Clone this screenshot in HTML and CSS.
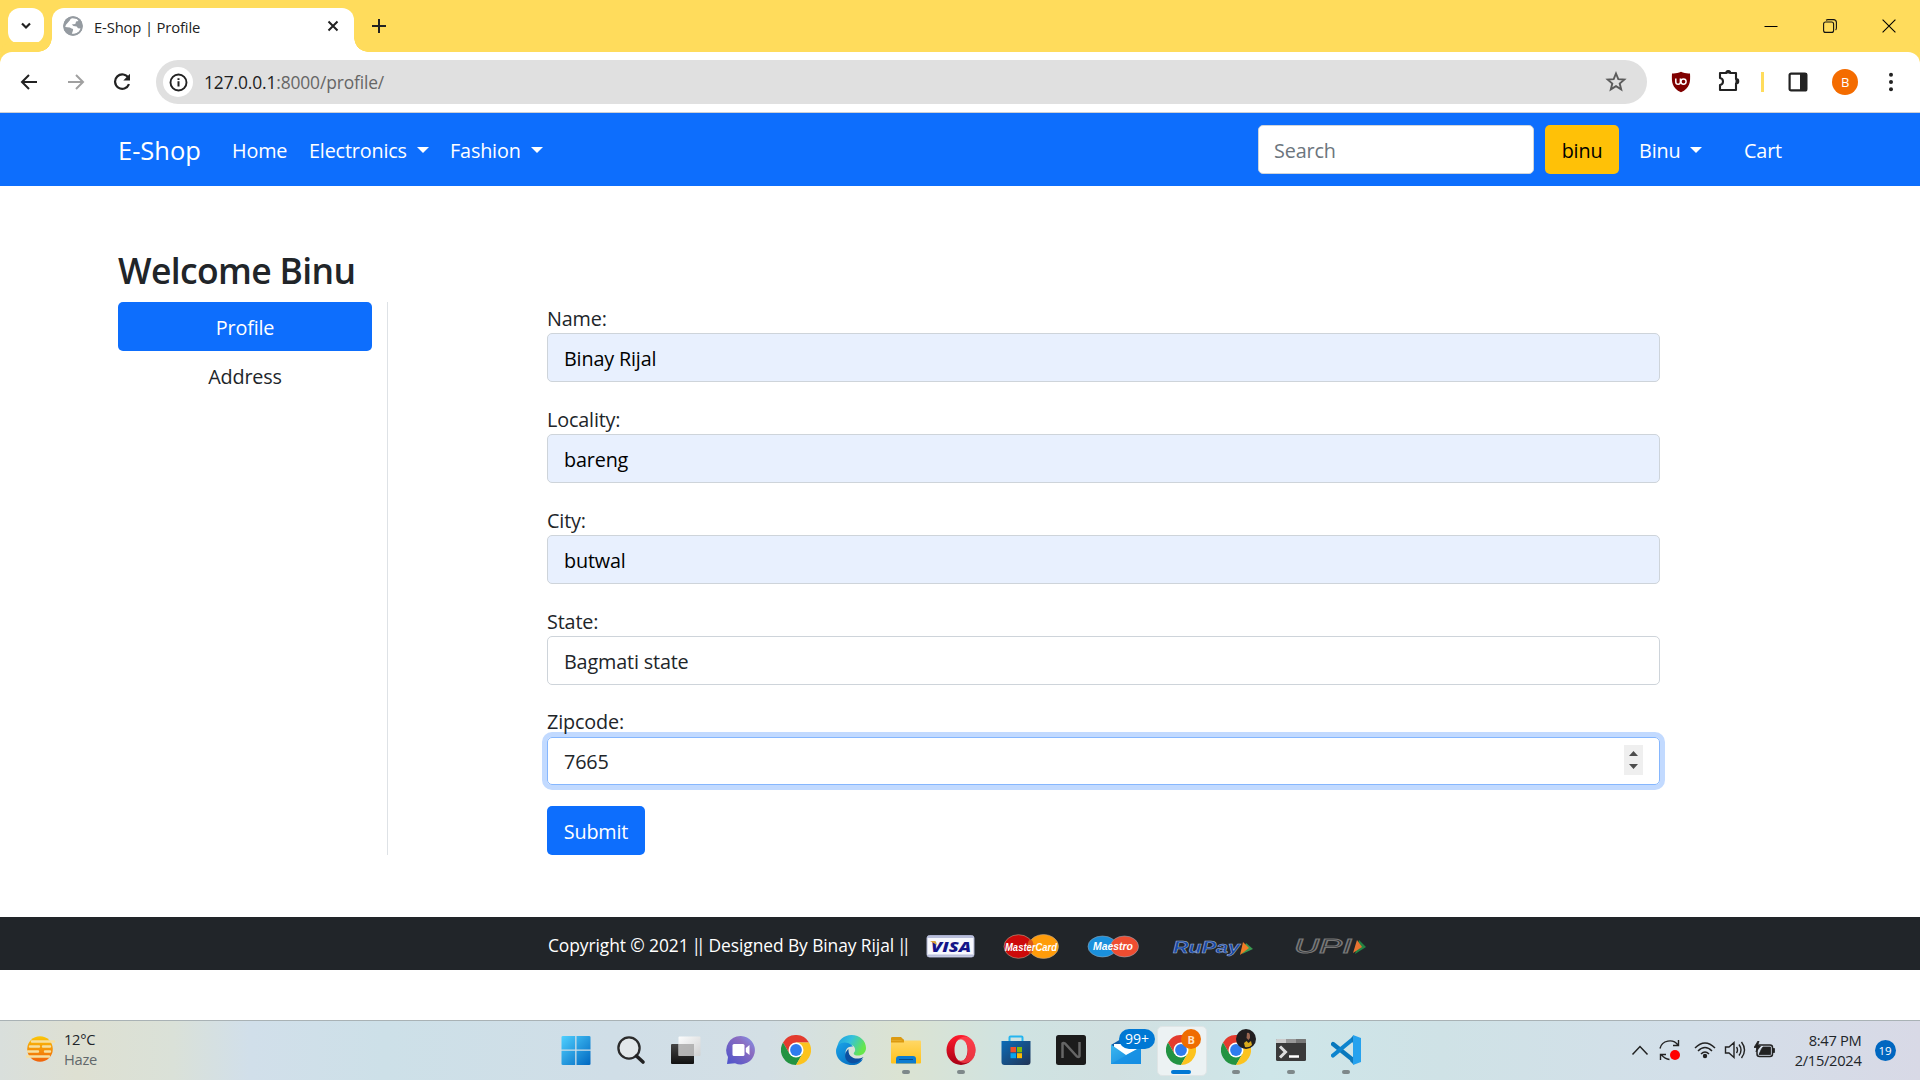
FILE: index.html
```html
<!DOCTYPE html>
<html lang="en">
<head>
<meta charset="utf-8">
<title>E-Shop | Profile</title>
<link rel="stylesheet" href="styles.css">
</head>
<body>
<svg class="defs" width="0" height="0">
  <defs>
    <linearGradient id="win" x1="0" y1="0" x2="1" y2="1"><stop offset="0" stop-color="#4fd0ff"/><stop offset="1" stop-color="#0067c0"/></linearGradient>
    <linearGradient id="dark" x1="0" y1="0" x2="0" y2="1"><stop offset="0" stop-color="#454545"/><stop offset="1" stop-color="#111"/></linearGradient>
    <linearGradient id="pane" x1="0" y1="0" x2="1" y2="1"><stop offset="0" stop-color="#fff"/><stop offset="1" stop-color="#d0d0d0"/></linearGradient>
    <linearGradient id="chat" x1="1" y1="0" x2="0" y2="1"><stop offset="0" stop-color="#8099f0"/><stop offset=".35" stop-color="#8b6cc0"/><stop offset="1" stop-color="#4a52cc"/></linearGradient>
    <linearGradient id="edgeTop" x1="0" y1="0" x2="1" y2=".4"><stop offset="0" stop-color="#1b9de2"/><stop offset=".5" stop-color="#35c1dc"/><stop offset="1" stop-color="#66e64b"/></linearGradient>
    <linearGradient id="edgeLow" x1="0" y1="0" x2="1" y2="1"><stop offset="0" stop-color="#1ba4e8"/><stop offset="1" stop-color="#0062b8"/></linearGradient>
    <linearGradient id="folder" x1="0" y1="0" x2="0" y2="1"><stop offset="0" stop-color="#ffd766"/><stop offset="1" stop-color="#ffc21a"/></linearGradient>
    <linearGradient id="opera" x1="0" y1="0" x2="0" y2="1"><stop offset="0" stop-color="#ff1b2d"/><stop offset="1" stop-color="#a70014"/></linearGradient>
    <linearGradient id="store" x1="0" y1="0" x2="1" y2="1"><stop offset="0" stop-color="#0c6cb8"/><stop offset="1" stop-color="#213456"/></linearGradient>
    <linearGradient id="mail" x1="0" y1="0" x2="1" y2="1"><stop offset="0" stop-color="#3cb8f0"/><stop offset="1" stop-color="#0f84dd"/></linearGradient>
    <linearGradient id="sun" x1="0" y1="0" x2="0" y2="1"><stop offset="0" stop-color="#fbc707"/><stop offset="1" stop-color="#f0620c"/></linearGradient>
    <symbol id="chrome" viewBox="0 0 30 30">
      <path d="M2 7.5A15 15 0 0 1 28 7.5H15L8.5 18.8z" fill="#e33b2e"/>
      <path d="M2 7.5A15 15 0 0 0 15 30L21.5 18.8H8.5z" fill="#229342"/>
      <path d="M28 7.5A15 15 0 0 1 15 30L21.5 18.8 15 7.5z" fill="#fcc31e"/>
      <circle cx="15" cy="15" r="7.5" fill="#fff"/><circle cx="15" cy="15" r="5.9" fill="#2f7cee"/>
    </symbol>
  </defs>
</svg>

<header class="tabstrip">
  <button class="tab-search"><svg width="12" height="8" viewBox="0 0 12 8"><path d="M2 1.5l4 4 4-4" fill="none" stroke="#222" stroke-width="2.2"/></svg></button>
  <div class="tab">
    <svg width="20" height="20" viewBox="0 0 20 20"><circle cx="10" cy="10" r="9.7" fill="#959ba1"/><path d="M9.5 2.2c-2.8.4-2 2-3.2 2.8L3 8.7 2.2 11l4.6.4c1.3.5 1.7 1.3 2.9 1.4.8.5.2 1.5.1 2.3l-1 2.7c4.3.4 7.8-1.7 8.9-5.4l-2.7-.1-1.3-1.8-3.2-.5-1.8-1.4 3.6-.6.8-2.5 2.4-.4-1.5-2z" fill="#fff"/><circle cx="10" cy="10" r="9" fill="none" stroke="#959ba1" stroke-width="1.6"/></svg>
    <span class="tab-title">E-Shop | Profile</span>
    <svg class="tab-close" width="12" height="12" viewBox="0 0 12 12"><path d="M1.5 1.5l9 9m0-9l-9 9" stroke="#222" stroke-width="2"/></svg>
  </div>
  <svg class="tab-new" width="14" height="14" viewBox="0 0 14 14"><path d="M7 0v14M0 7h14" stroke="#222" stroke-width="2"/></svg>
  <div class="window-buttons">
    <svg width="14" height="14" viewBox="0 0 14 14"><path d="M.5 7.5h13" stroke="#000"/></svg>
    <svg width="14" height="14" viewBox="0 0 14 14"><g fill="none" stroke="#111" stroke-width="1.1"><rect x=".6" y="3" width="10" height="10.4" rx="2"/><path d="M3 1.2Q4 .6 5 .6h5.400q3 0 3 3v5.400q0 1.200-.8 2"/></g></svg>
    <svg width="14" height="14" viewBox="0 0 14 14"><path d="M.6.6l12.800 12.800m0-12.800L.6 13.400" stroke="#000" stroke-width="1.1"/></svg>
  </div>
</header>

<div class="toolbar">
  <div class="nav-buttons">
    <svg width="18" height="18" viewBox="0 0 18 18"><path d="M17 9H2.500M9 2L2 9l7 7" fill="none" stroke="#222" stroke-width="2"/></svg>
    <svg width="18" height="18" viewBox="0 0 18 18"><path d="M1 9h14.500M9 2l7 7-7 7" fill="none" stroke="#a0a0a0" stroke-width="2"/></svg>
    <svg width="18" height="18" viewBox="0 0 18 18"><path d="M15.500 5A7.200 7.200 0 1 0 16 11.200" fill="none" stroke="#222" stroke-width="2.200"/><path d="M17 .8v6.700h-6.700z" fill="#222"/></svg>
  </div>
  <div class="address-bar">
    <span class="site-info"><svg width="19" height="19" viewBox="0 0 19 19"><circle cx="9.500" cy="9.500" r="8" fill="none" stroke="#222" stroke-width="1.900"/><path d="M9.500 8.200v5.300M9.500 5.200v1.900" stroke="#222" stroke-width="2"/></svg></span>
    <span class="url"><b>127.0.0.1</b>:8000/profile/</span>
    <svg class="star" width="22" height="22" viewBox="0 0 22 22"><path d="M11 2.500l2.300 5.600 6 .5-4.600 3.900 1.500 5.900-5.200-3.200-5.200 3.200 1.500-5.900L2.700 8.600l6-.5z" fill="none" stroke="#5b5b5b" stroke-width="1.900"/></svg>
  </div>
  <div class="extensions">
    <svg width="20" height="22" viewBox="0 0 20 22"><path d="M10 .8C7 2.300 4 2.600 1 2.400c-.5 8.600 0 14.600 9 18.900 9-4.300 9.500-10.300 9-18.900-3 .2-6-.1-9-1.600z" fill="#800000"/><path d="M4.800 7.500v3.400q0 2.300 2.300 2.300t2.300-2.300V7.500" fill="none" stroke="#fff" stroke-width="1.500"/><circle cx="12.500" cy="10.600" r="2.600" fill="none" stroke="#fff" stroke-width="1.500"/></svg>
    <svg width="24" height="24" viewBox="0 0 24 24"><path d="M3 5h6.200a2 2 0 0 1 4 0H19v6a2 2 0 0 1 0 4.500V22H3v-5q3-.5 3-3.500t-3-3.500z" fill="none" stroke="#222" stroke-width="2.100" stroke-linejoin="round"/><path d="M9 5a2 2 0 0 1 4.500 0zM19 11a2.200 2.200 0 0 1 0 4.500z" fill="#222" stroke="#222"/></svg>
    <i class="divider"></i>
    <svg width="20" height="20" viewBox="0 0 20 20"><rect x="1.600" y="1.600" width="16.800" height="16.800" rx="1.500" fill="none" stroke="#222" stroke-width="2.200"/><path d="M12 1h7v18h-7z" fill="#222"/></svg>
    <span class="avatar">B</span>
    <svg width="6" height="20" viewBox="0 0 6 20"><g fill="#222"><circle cx="3" cy="2.800" r="2"/><circle cx="3" cy="10" r="2"/><circle cx="3" cy="17.200" r="2"/></g></svg>
  </div>
</div>

<nav class="navbar">
  <a class="brand">E-Shop</a>
  <a class="home">Home</a>
  <a class="electronics">Electronics <i class="caret"></i></a>
  <a class="fashion">Fashion <i class="caret"></i></a>
  <div class="nav-right">
    <div class="search">Search</div>
    <div class="search-button">binu</div>
    <a class="account">Binu <i class="caret"></i></a>
    <a class="cart">Cart</a>
  </div>
</nav>

<main class="page">
  <h3>Welcome Binu</h3>
  <div class="columns">
    <aside class="side">
      <a class="pill active">Profile</a>
      <a class="pill">Address</a>
    </aside>
    <form class="profile-form">
      <label>Name:</label><div class="field autofill">Binay Rijal</div>
      <label>Locality:</label><div class="field autofill">bareng</div>
      <label>City:</label><div class="field autofill">butwal</div>
      <label>State:</label><div class="field">Bagmati state</div>
      <label class="zip">Zipcode:</label><div class="field focus"><span>7665</span>
        <svg width="19" height="30" viewBox="0 0 19 30"><path d="M0 0h19v30H0z" fill="#efefef"/><path d="M5 11l4.500-5 4.500 5zM5 19l4.500 5 4.500-5z" fill="#4d4d4d"/></svg></div>
      <button class="submit" type="button">Submit</button>
    </form>
  </div>
</main>

<footer class="footer">
  <span class="copyright">Copyright © 2021 <i>||</i> Designed By Binay Rijal <i>||</i></span>
  <svg width="450" height="30" viewBox="0 0 450 30">
    <rect x="1" y="4.500" width="47" height="21.500" rx="2.500" fill="#f7f8fd" stroke="#aab0ce"/><path d="M2 5h45v2H2zM2 23.500h45v2H2z" fill="#b9bfdc"/>
    <text x="5" y="20.500" class="visa" textLength="40" lengthAdjust="spacingAndGlyphs">VISA</text><path d="M4 10h5.500l1.500 4z" fill="#dda53a"/>
    <g stroke="#b9a58c" stroke-width=".6"><ellipse cx="92.500" cy="15.500" rx="14.500" ry="11.800" fill="#cc0a0a"/><ellipse cx="117.500" cy="15.500" rx="15" ry="12" fill="#ff9c0a"/></g><ellipse cx="104.500" cy="15.500" rx="3" ry="7" fill="#d9581a"/>
    <text x="79" y="19.500" class="card" textLength="52" lengthAdjust="spacingAndGlyphs">MasterCard</text>
    <g stroke="#8fa4b5" stroke-width=".6"><ellipse cx="176.500" cy="15.500" rx="14.500" ry="10.500" fill="#1a90dc"/><ellipse cx="198.500" cy="15.500" rx="14" ry="10.500" fill="#ee4d31"/></g>
    <text x="167" y="19" class="card" textLength="40" lengthAdjust="spacingAndGlyphs">Maestro</text>
    <text x="247" y="22" class="rupay" textLength="67" lengthAdjust="spacingAndGlyphs">RuPay</text>
    <path d="M320 12l7 6-11 5z" fill="#3a9a50"/><path d="M317 11l6 6-9 7z" fill="#f07c26"/>
    <text x="368" y="22" class="upi" textLength="58" lengthAdjust="spacingAndGlyphs">UPI</text>
    <path d="M433 9l7 7-11 7z" fill="#238343"/><path d="M431 9l5 7-9 6z" fill="#e87431"/>
  </svg>
</footer>

<div class="taskbar">
  <div class="weather">
    <svg width="32" height="30" viewBox="0 0 32 30"><circle cx="15" cy="15" r="12.800" fill="url(#sun)"/><g stroke="#f6dfa0" stroke-width="2.400" stroke-linecap="round"><path d="M7 7.500h22M5 12.500h9M18 12.500h7M3 17.500h10M2 22.500h22M20 17.500h5"/></g></svg>
    <div><div class="temp">12°C</div><div class="haze">Haze</div></div>
  </div>
  <div class="apps">
    <span><svg width="30" height="30" viewBox="0 0 30 30"><path d="M.5 2Q.5 1 2 1h12.200v13.500H.5zM15.500 1H28q1.500 0 1.500 1v12.500h-14zM.5 15.700h13.700V30H2q-1.500 0-1.500-1zM15.500 15.700h14V29q0 1-1.500 1H15.500z" fill="url(#win)"/></svg></span>
    <span><svg width="30" height="30" viewBox="0 0 30 30"><circle cx="13" cy="13" r="10.600" fill="#e3e8ea" stroke="#2b2b2b" stroke-width="2.300"/><path d="M20.500 21l6.500 6" stroke="#222" stroke-width="3.600" stroke-linecap="round"/></svg></span>
    <span><svg width="30" height="30" viewBox="0 0 30 30"><rect y="9" width="23" height="20" rx="1" fill="url(#dark)"/><rect x="7.500" y="1.500" width="22" height="19.500" rx="1" fill="url(#pane)" opacity=".93"/><path d="M7.500 9H23v12H7.500z" fill="#aaa" opacity=".8"/></svg></span>
    <span><svg width="30" height="30" viewBox="0 0 30 30"><path d="M15 1a14.200 14.200 0 1 1-6 27.200L1 29l1-7A14.200 14.200 0 0 1 15 1z" fill="url(#chat)"/><rect x="6.500" y="9" width="12" height="12" rx="1.500" fill="#fff"/><path d="M19.800 13l3.700-3v10l-3.700-3z" fill="#fff"/></svg></span>
    <span><svg width="30" height="30"><use href="#chrome"/></svg></span>
    <span><svg width="30" height="30" viewBox="0 0 30 30"><path d="M1 13C2 5 8 0 15.500 0 24 0 30 6 30 13c0 5-4 7.500-8 7.500-4.500 0-5-2-3.500-3.500 1.500-2 .500-6-3-7C10 8 4 9 1 13z" fill="url(#edgeTop)"/><path d="M0 16C0 9 7 6 12 8q3.500 1 5 3.500c-9-1-10 10-2 14q5 2.500 12-1.500C23 31 15 31 10 29 4 27 0 22 0 16z" fill="url(#edgeLow)"/><path d="M12.500 14c-7 6-2 16 6.500 14q5-1 8.500-6c-5 2.500-10 2-13-1-2-2-2-4.500-2-7z" fill="#0c4fa0"/></svg></span>
    <span class="open"><svg width="30" height="30" viewBox="0 0 30 30"><path d="M0 3q0-1 1.500-1H10l3 3v7H0z" fill="#dc9a10"/><rect y="5.500" width="30" height="23" rx="1" fill="url(#folder)"/><path d="M0 5.500h10l3-1v3H0z" fill="#dc9a10"/><path d="M5 28.500V24q0-3 3-3h14q3 0 3 3v4.500z" fill="#0c7cd0"/><path d="M8 24.500h14" stroke="#074e8c"/></svg></span>
    <span class="open"><svg width="30" height="30" viewBox="0 0 30 30"><path fill-rule="evenodd" d="M15 0a14.500 15 0 1 0 0 30A14.500 15 0 1 0 15 0zm0 4c4 0 6.500 5 6.500 11S19 26 15 26 8.500 21 8.500 15 11 4 15 4z" fill="url(#opera)"/><path d="M10 6Q20-3 27 6q5 9 0 18-8 8-17 0 6 4 10-1 4-8 0-15-4-6-10-2z" fill="#ff4b55" opacity=".7"/></svg></span>
    <span><svg width="30" height="30" viewBox="0 0 30 30"><path d="M8.500 7V2.500q0-1 1-1h11q1 0 1 1V7" fill="none" stroke="#25b5ef" stroke-width="2"/><path d="M.5 6h29v21q0 3-3 3h-23q-3 0-3-3z" fill="url(#store)"/><path d="M9.500 12H15v5.300H9.500z" fill="#f1502b"/><path d="M16 12h5v5.300h-5z" fill="#80bb09"/><path d="M9.500 18.200H15v5H9.500z" fill="#08a5ef"/><path d="M16 18.200h5v5h-5z" fill="#ffb901"/></svg></span>
    <span><svg width="30" height="30" viewBox="0 0 30 30"><rect width="30" height="30" rx="2.500" fill="#1b1b1b"/><path d="M6.500 23V8.500q1-1 2.500 0l12 13q2 1 2.500-.5V7" fill="none" stroke="#666" stroke-width="2.500"/></svg></span>
    <span class="mail"><svg width="30" height="30" viewBox="0 0 30 30"><path d="M0 10L15 1l15 9v19H0z" fill="#0d5ca8"/><path d="M3 9h24v12H3z" fill="#fff"/><path d="M0 9.500L15 20l15-8v17H0z" fill="url(#mail)"/><path d="M0 29l30-17v17z" fill="#1690e3" opacity=".8"/></svg><b>99+</b></span>
    <span class="current"><svg width="30" height="30"><use href="#chrome"/></svg><b>B</b></span>
    <span class="open second"><svg width="30" height="30"><use href="#chrome"/></svg><svg class="face" width="20" height="20" viewBox="0 0 20 20"><circle cx="10" cy="10" r="10" fill="#211e20"/><path d="M11 4q3.500-1 3 5l-1.500 2-2-2z" fill="#9b6651"/><path d="M8 14l2.500-2 2 2 2.500-2 1 4q-3 3-7 2z" fill="#d8a91d"/></svg></span>
    <span class="open"><svg width="30" height="30" viewBox="0 0 30 30"><rect y="4" width="30" height="22" rx="1.500" fill="#3a3a3a"/><path d="M1 4h9v4H0V5q0-1 1-1z" fill="#ccc"/><path d="M10 4h10v4H10z" fill="#999"/><path d="M20 4h9q1 0 1 1v3H20z" fill="#777"/><path d="M4 11.500l5.500 5.500L4 22.500" fill="none" stroke="#ddd" stroke-width="3"/><path d="M13 21.500h10" stroke="#fff" stroke-width="2.500"/></svg></span>
    <span class="open"><svg width="30" height="30" viewBox="0 0 30 30"><path d="M2 9l20 16" stroke="#0878bd" stroke-width="4.200" stroke-linecap="round"/><path d="M2 20.500L22 4" stroke="#0d84ce" stroke-width="4.200" stroke-linecap="round"/><path d="M22 0l8 3v24l-8 3z" fill="#26a2ee"/><path d="M22 .500v8l-2-5zM22 29v-7l-3 4z" fill="#1179ba"/></svg></span>
  </div>
  <div class="tray">
    <svg width="18" height="12" viewBox="0 0 18 12"><path d="M1.500 10.500L9 2.500l7.500 8" fill="none" stroke="#222" stroke-width="1.500"/></svg>
    <svg width="22" height="22" viewBox="0 0 22 22"><path d="M1 9.500A10 9.500 0 0 1 19 6M19.500 1v5.500H14M10.500 20.500Q6 20 2.500 16M1.500 21v-5.500H7" fill="none" stroke="#222" stroke-width="1.400"/><circle cx="16" cy="16" r="5" fill="#f00"/></svg>
    <svg width="22" height="18" viewBox="0 0 22 18"><g fill="none" stroke="#222" stroke-width="1.500"><path d="M1 7q10-10 20 0M4 10q7-7 14 0M7 13q4-4 8 0"/></g><circle cx="11" cy="15" r="2.200" fill="#222"/></svg>
    <svg width="22" height="20" viewBox="0 0 22 20"><g fill="none" stroke="#222" stroke-width="1.400"><path d="M1.500 7H5l5-4.500v15L5 13H1.500zM12.500 7q2 3 0 6M15 4.500q4 5.500 0 11M17.500 2q6 8 0 16"/></g></svg>
    <svg width="22" height="18" viewBox="0 0 22 18"><rect x="3" y="4" width="15.500" height="11.500" rx="2.500" fill="none" stroke="#222" stroke-width="1.500"/><path d="M5 13.500L7.500 8 9 6h7.500v7.500zM19 7.500h1.500v4H19zM4 0L0 6.500h3L2 11l4.500-6h-3L5 0z" fill="#222" stroke="#222" stroke-width=".8"/></svg>
    <div class="clock"><div>8:47 PM</div><div class="date">2/15/2024</div></div>
    <span class="notice">19</span>
  </div>
</div>
</body>
</html>
```
FILE: styles.css
```css
* { box-sizing: border-box; }
html, body { margin: 0; }
body {
  width: 1920px; height: 1080px; overflow: hidden;
  display: flex; flex-direction: column;
  background: #fff; color: #212529;
  font-family: "Open Sans", "Noto Sans", sans-serif;
  font-size: 19.8px; letter-spacing: -0.16px;
}
svg { display: block; flex: none; }
.defs { position: absolute; }
button { border: 0; padding: 0; font: inherit; letter-spacing: inherit; }

.tabstrip { height: 52px; display: flex; align-items: flex-start; background: #ffdc5c; padding: 8px 0 0 8px; }
.tab-search { width: 36px; height: 36px; border-radius: 12px; background: #fff; display: flex; align-items: center; justify-content: center; }
.tab {
  position: relative; width: 302px; height: 44px; margin-left: 8px; padding: 0 15px 8px 11px;
  display: flex; align-items: center; background: #fff; border-radius: 12px 12px 0 0;
}
.tab::before, .tab::after { content: ""; position: absolute; bottom: 0; width: 14px; height: 14px; }
.tab::before { left: -14px; background: radial-gradient(circle at 0 0, transparent 13.5px, #fff 14px); }
.tab::after { right: -14px; background: radial-gradient(circle at 100% 0, transparent 13.5px, #fff 14px); }
.tab-title { margin-left: 11px; font-size: 14.8px; letter-spacing: -0.15px; color: #222; padding-top: 1px; }
.tab-close { margin-left: auto; }
.tab-new { margin: 11px 0 0 18px; }
.window-buttons { margin: 11px 24px 0 auto; display: flex; gap: 45px; }

.toolbar {
  height: 61px; background: #fff; border-bottom: 1px solid #cdd0d5;
  box-shadow: 0 -10px 0 #ffdc5c; border-radius: 12px 12px 0 0; display: flex; align-items: center; padding-left: 20px;
}
.nav-buttons { display: flex; gap: 28.500px; width: 136px; }
.address-bar { width: 1491px; height: 44px; border-radius: 22px; background: #e0e0e0; display: flex; align-items: center; padding: 0 20px 0 7px; }
.site-info { width: 30px; height: 30px; border-radius: 50%; background: #fff; display: grid; place-items: center; }
.url { margin-left: 11px; font-size: 17.4px; letter-spacing: -0.13px; color: #666; }
.url b { font-weight: 400; color: #202020; }
.star { margin-left: auto; }
.extensions { display: flex; align-items: center; margin-left: 24px; }
.extensions > :nth-child(2) { margin-left: 26px; margin-top: -4px; }
.divider { width: 3px; height: 20px; background: #ffdc5c; margin: 0 24px 0 20px; }
.avatar { width: 26px; height: 26px; margin: 0 30px 0 24px; border-radius: 50%; background: #f46c00; color: #fff; display: grid; place-items: center; font-size: 13px; }

.navbar { height: 73px; background: #0d6efd; color: #fff; display: flex; align-items: center; padding: 0 138px 0 118px; }
.navbar a { white-space: nowrap; display: flex; align-items: center; padding-top: 2px; }
.caret { margin: -1px 0 0 10px; border: 6px solid transparent; border-top-color: currentColor; border-bottom: 0; }
.navbar .brand { width: 114px; font-size: 25.5px; letter-spacing: 0; padding-top: 1px; }
.home { width: 77px; }
.electronics { width: 141px; }
.nav-right { display: flex; align-items: center; margin-left: auto; }
.search { width: 276px; height: 49px; border: 1px solid #ced4da; border-radius: 5px; background: #fff; color: #6c757d; padding: 0 15px; line-height: 50px; }
.search-button { width: 74px; height: 49px; margin-left: 11px; border-radius: 5px; background: #ffc107; color: #000; line-height: 51px; text-align: center; }
.account { width: 105px; margin-left: 20px; }

.page { height: 731px; padding: 62px 260px 0 118px; }
h3 { margin: 0; height: 54px; font-size: 35.5px; line-height: 44px; font-weight: 600; letter-spacing: -0.65px; }
.columns { display: flex; height: 553px; }
.side { width: 270px; padding-right: 15px; border-right: 1px solid #dee2e6; }
.pill { display: block; height: 49px; border-radius: 5px; line-height: 51px; text-align: center; }
.pill.active { background: #0d6efd; color: #fff; }
.profile-form { width: 1113px; margin-left: 159px; }
label { display: block; height: 31px; line-height: 33px; }
label.zip { line-height: 31px; }
.field {
  height: 49px; margin-bottom: 21px; padding: 2px 16px 0; border: 1px solid #ced4da; border-radius: 5px;
  display: flex; align-items: center; justify-content: space-between;
}
.autofill { background: #e8f0fe; color: #000; }
.focus { height: 48px; padding-top: 0; border-color: #86b7fe; box-shadow: 0 0 0 5px #c2daff; }
.focus svg { margin-top: -2px; }
.submit { display: block; width: 98px; height: 49px; padding-top: 1px; background: #0d6efd; color: #fff; border-radius: 5px; }

.footer { height: 53px; background: #212529; color: #fff; display: flex; align-items: center; padding-left: 548px; }
.copyright { width: 378px; white-space: nowrap; font-size: 17.4px; letter-spacing: -0.08px; padding-top: 3px; }
.copyright i { font-style: normal; letter-spacing: -5px; margin: 0 3.5px 0 -1.5px; }
.footer svg { margin-top: 5px; }
.visa { font: italic 800 14.5px "Open Sans", sans-serif; fill: #141488; letter-spacing: 0; }
.card { font: italic bold 11px "Liberation Sans", sans-serif; fill: #fff; letter-spacing: 0; }
.rupay { font: italic bold 16px "Liberation Sans", sans-serif; fill: #1747a6; stroke: #a3b2cc; stroke-width: .5; letter-spacing: 0; }
.upi { font: italic 19.5px "Liberation Sans", sans-serif; fill: #25292d; stroke: #777; stroke-width: 1; letter-spacing: 0; }

.taskbar {
  height: 60px; margin-top: 50px; border-top: 1px solid #a9b2b5; display: grid; grid-template-columns: 548px 825.5px 1fr;
  background: linear-gradient(90deg, #d9dfdc, #dee0d2 4%, #dae1d8 9%, #d1dfea 13%, #cde0e8 20%, #d0dee7 32%, #d3dfe5 40%, #dbe3d2 47%, #cfe3e2 53%, #d1e0e1 58%, #cee6e9 66%, #cfe2e6 75%, #d3dfe9 88%, #d8d9e6);
}
.weather { display: flex; padding: 13px 0 0 25px; font-size: 14.7px; line-height: 20px; letter-spacing: -0.3px; }
.weather > div { margin: -5px 0 0 7px; }
.haze { color: #62686b; }
.apps { display: flex; }
.apps span { position: relative; width: 55px; height: 58px; display: grid; place-items: center; }
.open::after, .current::after { content: ""; position: absolute; z-index: 2; bottom: 5px; left: 23.5px; width: 8px; height: 4px; border-radius: 2px; background: #7e888a; }
.current::before { content: ""; position: absolute; left: 3.500px; top: 5px; width: 48px; height: 48px; border-radius: 5px; background: #ecf2f3; border: 1px solid #dfe5e6; }
.current svg { position: relative; }
.current::after { left: 17.500px; width: 20px; background: #0078d4; }
.current b { position: absolute; left: 28px; top: 8px; width: 20px; height: 20px; border-radius: 50%; background: #ef6c00; color: #ffe0c0; display: grid; place-items: center; font-size: 11px; }
.mail b { position: absolute; left: 21px; top: 8px; z-index: 2; width: 36px; height: 20px; border-radius: 10px; background: #0078d4; color: #fff; font-size: 14px; font-weight: 400; line-height: 20px; text-align: center; letter-spacing: 0; }
.second .face { position: absolute; left: 28px; top: 8px; }
.tray { display: flex; align-items: center; height: 58px; padding-left: 257px; gap: 9px; }
.tray > :nth-child(2) { margin-left: 1px; }
.tray > :nth-child(3) { margin-left: 4px; }
.tray > :nth-child(4) { margin-left: -1px; }
.tray > :nth-child(5) { margin-left: -1px; }
.clock { width: 78px; margin: -1px 0 0 -1px; font-size: 14.7px; line-height: 20px; letter-spacing: -0.3px; text-align: right; white-space: nowrap; }
.notice { width: 21px; height: 21px; margin-left: 4px; border-radius: 50%; background: #0067c0; color: #fff; font-size: 11.500px; display: grid; place-items: center; }
```
